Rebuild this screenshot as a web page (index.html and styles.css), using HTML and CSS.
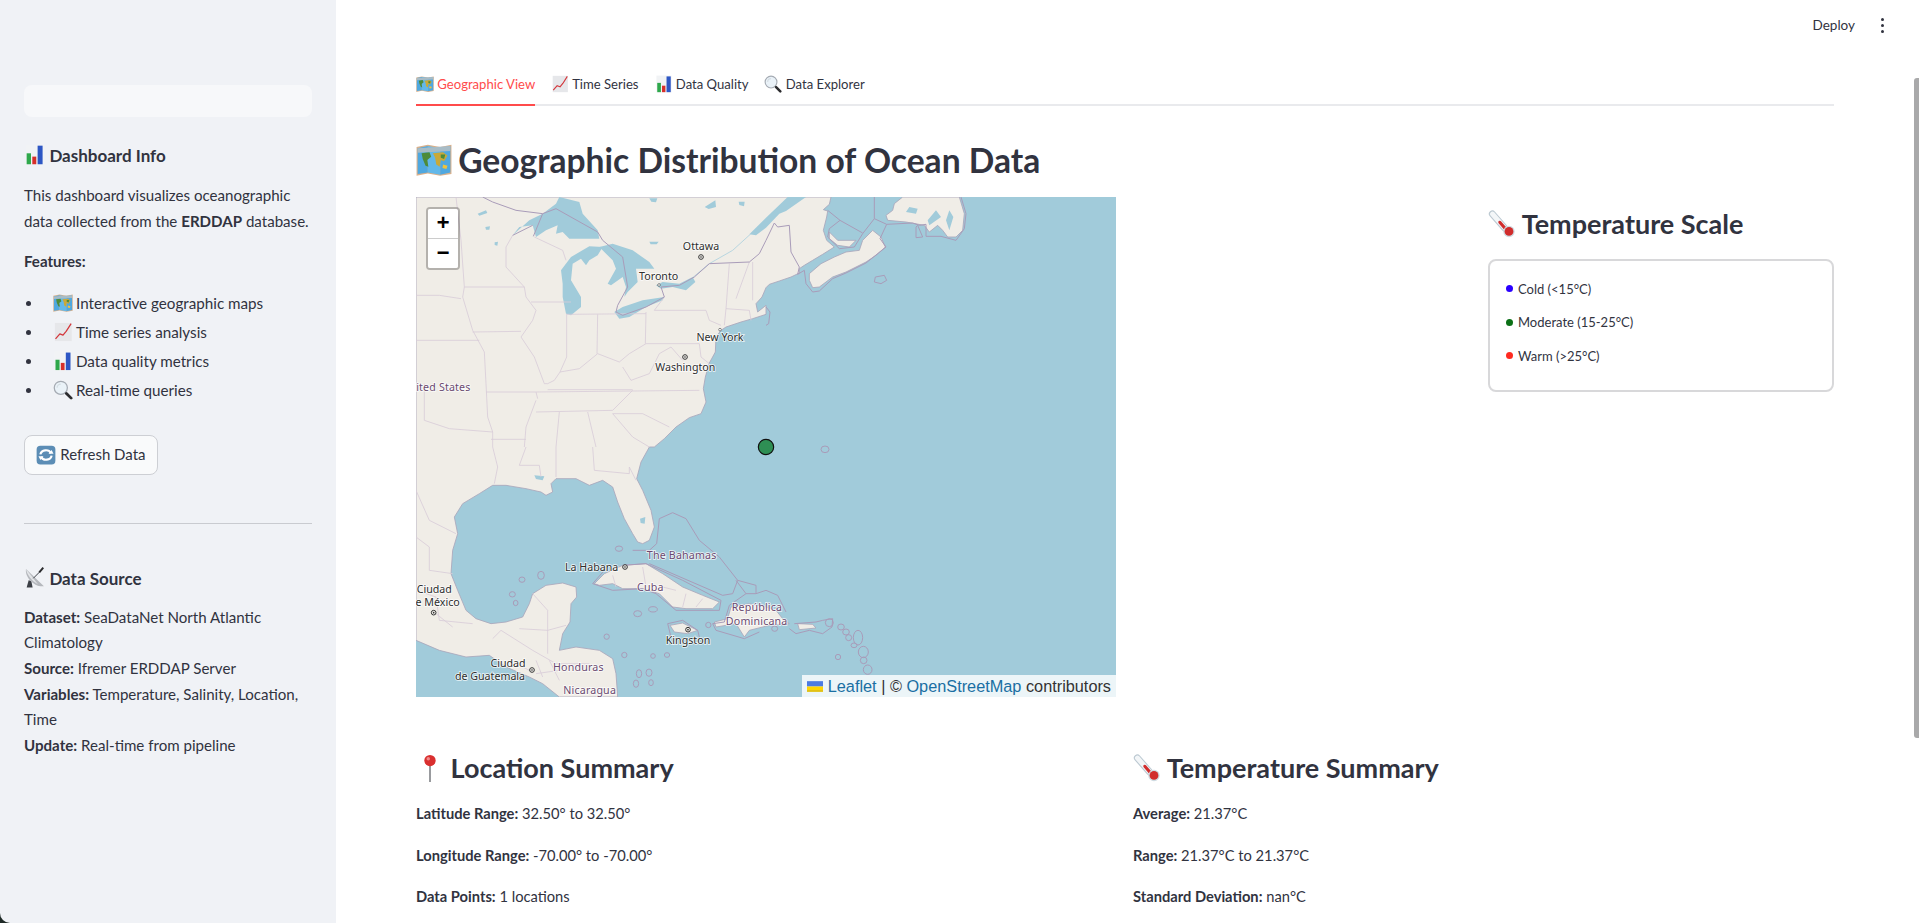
FILE: index.html
```html
<!DOCTYPE html>
<html lang="en">
<head>
    <meta charset="UTF-8">
    <title>Ocean Data Dashboard</title>
    <link rel="stylesheet" href="styles.css">
</head>
<body>
    <!-- emoji drawn once, used everywhere below -->
    <svg class="sprite" xmlns="http://www.w3.org/2000/svg">
        <symbol id="e-map" viewBox="0 0 64 64">
            <path fill="#d8b08c" d="M1 9 21 5 43 9 63 5V57L43 60 21 56 1 60Z"/>
            <path fill="#4fa8e0" d="M3 11 21 7V54L3 57Z"/>
            <path fill="#62b8ea" d="M21 7 43 11V58L21 54Z"/>
            <path fill="#4fa8e0" d="M43 11 61 7V54L43 58Z"/>
            <path fill="#a8bcc6" d="M3 11 61 7V16L3 19Z"/>
            <path fill="#4d8b3a" d="M10 20 24 18 27 26 20 32 22 44 17 42 12 30Z"/>
            <path fill="#c9a93a" d="M30 20 48 18 56 24 50 34 44 32 42 44 36 40 34 28Z"/>
            <path fill="#4d8b3a" d="M44 22 52 22 50 30 44 28Z"/>
            <path fill="#f0c23c" d="M48 40 56 42 54 48 47 46Z"/>
        </symbol>
        <symbol id="e-bars" viewBox="0 0 64 64">
            <rect x="5" y="2" width="54" height="60" fill="#f1f3f5"/>
            <rect x="8" y="28" width="13" height="33" fill="#2ea84b"/>
            <rect x="25" y="38" width="12" height="23" fill="#d62f2a"/>
            <rect x="41" y="5" width="15" height="56" fill="#2d56c4"/>
        </symbol>
        <symbol id="e-up" viewBox="0 0 64 64">
            <rect x="6" y="3" width="54" height="58" fill="#e6e7ea"/>
            <path fill="none" stroke="#d3363b" stroke-width="4" stroke-linejoin="round" d="M8 54 22 38 32 42 42 30 58 5"/>
        </symbol>
        <symbol id="e-glass" viewBox="0 0 64 64">
            <circle cx="25" cy="25" r="21" fill="#eaf2f8" stroke="#a5abb3" stroke-width="4"/>
            <path fill="none" stroke="#d5dde3" stroke-width="4" d="M13 25A12 12 0 0 1 25 13"/>
            <path stroke="#2b2b2e" stroke-width="9" stroke-linecap="round" d="M43 43 58 58"/>
        </symbol>
        <symbol id="e-refresh" viewBox="0 0 64 64">
            <rect x="2" y="2" width="60" height="60" rx="12" fill="#5c8db5"/>
            <path fill="none" stroke="#fff" stroke-width="7" d="M14 30A18 16 0 0 1 48 26"/>
            <path fill="#fff" d="M40 28 56 28 50 16Z"/>
            <path fill="none" stroke="#fff" stroke-width="7" d="M50 34A18 16 0 0 1 16 38"/>
            <path fill="#fff" d="M24 36 8 36 14 48Z"/>
        </symbol>
        <symbol id="e-dish" viewBox="0 0 64 64">
            <path fill="#3c4046" d="M14 40 8 62H26L22 42Z"/>
            <path fill="#b5b8bd" d="M6 6C2 30 30 62 60 58Z"/>
            <path fill="#e3e5e8" d="M6 6C8 20 22 42 42 52Z"/>
            <path stroke="#3c4046" stroke-width="3" d="M28 34 48 14"/>
            <path stroke="#2b2b2e" stroke-width="6" d="M46 16 58 2"/>
        </symbol>
        <symbol id="e-thermo" viewBox="0 0 64 64">
            <path stroke="#bcc9d2" stroke-width="16" stroke-linecap="round" d="M10 9 38 41"/>
            <path stroke="#f3f6f8" stroke-width="11" stroke-linecap="round" d="M10 9 38 41"/>
            <path stroke="#d12c2c" stroke-width="7" stroke-linecap="round" d="M27 28 46 50"/>
            <circle cx="48" cy="49" r="13" fill="#cfdbe2"/>
            <circle cx="48" cy="49" r="10" fill="#d12c2c"/>
        </symbol>
        <symbol id="e-pin" viewBox="0 0 64 64">
            <path stroke="#8b8d90" stroke-width="4" d="M32 26V64"/>
            <circle cx="32" cy="15" r="13" fill="#d92f2f"/>
            <circle cx="28" cy="11" r="4" fill="#f08a8a"/>
        </symbol>
    </svg>

    <aside class="sidebar">
        <div class="sidebar-box"></div>

        <h4 class="side-title"><svg class="emoji"><use href="#e-bars"/></svg> Dashboard Info</h4>
        <p class="side-text">This dashboard visualizes oceanographic data collected from the <b>ERDDAP</b> database.</p>
        <p class="side-text features"><b>Features:</b></p>
        <ul class="side-list">
            <li><svg class="emoji"><use href="#e-map"/></svg><span>Interactive geographic maps</span></li>
            <li><svg class="emoji"><use href="#e-up"/></svg><span>Time series analysis</span></li>
            <li><svg class="emoji"><use href="#e-bars"/></svg><span>Data quality metrics</span></li>
            <li><svg class="emoji"><use href="#e-glass"/></svg><span>Real-time queries</span></li>
        </ul>
        <button class="refresh-btn" type="button"><svg class="emoji"><use href="#e-refresh"/></svg> Refresh Data</button>

        <hr class="side-rule">

        <h4 class="side-title"><svg class="emoji"><use href="#e-dish"/></svg> Data Source</h4>
        <p class="side-text source">
            <b>Dataset:</b> SeaDataNet North Atlantic Climatology<br>
            <b>Source:</b> Ifremer ERDDAP Server<br>
            <b>Variables:</b> Temperature, Salinity, Location, Time<br>
            <b>Update:</b> Real-time from pipeline
        </p>
    </aside>

    <main class="main">
        <div class="toolbar">
            <span class="deploy">Deploy</span>
            <span class="kebab"><i></i><i></i><i></i></span>
        </div>

        <div class="content">
            <nav class="tabs">
                <a class="tab active"><svg class="emoji"><use href="#e-map"/></svg> Geographic View</a>
                <a class="tab"><svg class="emoji"><use href="#e-up"/></svg> Time Series</a>
                <a class="tab"><svg class="emoji"><use href="#e-bars"/></svg> Data Quality</a>
                <a class="tab"><svg class="emoji"><use href="#e-glass"/></svg> Data Explorer</a>
            </nav>

            <h2 class="page-title"><svg class="emoji"><use href="#e-map"/></svg> Geographic Distribution of Ocean Data</h2>

            <div class="map-row">
                <div class="map">
                    <svg class="map-art" viewBox="0 0 2100 1500" xmlns="http://www.w3.org/2000/svg">
                        <rect class="water" width="2100" height="1500"/>

                        <!-- mainland -->
                        <path class="land" d="M0 0 1245 0 1240 22 1222 38 1235 42 1232 60 1222 100 1232 130 1255 150 1220 172 1190 190 1165 205 1150 215 1150 228 1125 240 1090 252 1060 262 1050 272 1038 300 1020 320 1025 345 1050 325 1050 352 1010 365 975 375 930 390 915 400 900 420 898 465 880 498 868 540 862 575 870 615 855 650 820 662 780 690 745 725 715 750 700 750 675 795 662 845 680 880 705 940 715 990 700 1030 680 1040 665 1035 650 1010 625 965 605 915 590 870 560 850 520 865 480 845 420 845 405 860 410 885 390 895 375 885 330 875 270 865 230 865 190 890 140 920 115 960 125 1010 110 1060 105 1130 125 1180 150 1240 180 1265 225 1280 270 1275 320 1260 340 1220 350 1190 390 1165 440 1158 480 1170 482 1200 465 1220 462 1275 440 1310 430 1360 480 1350 550 1360 590 1385 600 1430 605 1500 430 1500 380 1460 340 1440 270 1410 220 1375 150 1380 70 1360 0 1330Z"/>
                        <!-- St Lawrence -->
                        <path class="lake" d="M1000 112 1050 62 1115 0 1170 0 1110 42 1090 50 1050 92 1020 115Z"/>
                        <path class="river" d="M830 242 880 200 950 160 1005 110"/>

                        <!-- islands -->
                        <path class="land" d="M1180 230 1215 200 1255 180 1290 165 1330 160 1340 130 1370 100 1395 120 1408 150 1380 175 1350 195 1290 225 1250 240 1210 270 1190 272 1180 250Z"/>
                        <path class="land" d="M1240 105 1265 130 1320 130 1300 150 1265 145 1240 125Z"/>
                        <path class="land" d="M1435 20 1460 0 1630 0 1645 50 1640 100 1620 120 1595 120 1580 100 1565 85 1540 105 1525 85 1470 75 1415 70 1410 55 1430 40Z"/>
                        <path class="land" d="M535 1160 565 1130 620 1105 690 1100 740 1130 800 1170 860 1195 910 1215 890 1235 810 1235 770 1230 730 1190 680 1175 620 1175 590 1160 550 1165Z"/>
                        <path class="land" d="M762 1285 800 1278 845 1300 815 1310 775 1305Z"/>
                        <path class="land" d="M895 1275 935 1265 945 1230 1000 1220 1050 1230 1080 1240 1100 1265 1120 1280 1060 1285 1000 1300 985 1320 960 1280 900 1290Z"/>
                        <path class="land" d="M1145 1280 1190 1282 1200 1293 1150 1298Z"/>

                        <!-- great lakes -->
                        <path class="lake" d="M290 115 340 70 380 50 420 20 430 0 490 15 500 50 545 100 550 125 490 125 460 125 440 105 420 110 425 85 390 100 360 120 350 85 310 90Z"/>
                        <path class="lake" d="M435 220 465 180 520 148 560 150 545 175 520 190 510 205 495 185 470 200 465 250 495 300 495 330 465 355 450 350 440 300 440 260Z"/>
                        <path class="lake" d="M550 150 590 140 650 160 700 195 715 215 660 215 665 255 635 285 625 300 630 270 620 240 585 265 575 260 600 215 590 190 565 165Z"/>
                        <path class="lake" d="M595 345 620 330 680 310 745 300 740 310 690 330 640 360 610 365Z"/>
                        <path class="lake" d="M720 265 740 255 790 260 830 240 838 255 810 280 770 270 735 275Z"/>
                        <path class="lake" d="M185 50 210 40 214 48 190 56Z M208 90 222 88 220 98 210 98Z M236 136 246 134 244 146 236 144Z M700 134 728 134 722 142 704 142Z M700 4 724 4 720 16 706 14Z M866 30 898 10 900 30 878 36Z M968 14 986 14 984 28 970 24Z M355 835 385 838 380 850 360 846Z M672 965 688 960 686 980 674 978Z"/>
                        <path class="lake" d="M1600 40 1612 60 1600 100 1590 70Z M1560 40 1575 60 1540 85 1535 70Z M1505 35 1480 30 1470 45 1500 50Z"/>

                        <!-- state and province lines -->
                        <g class="state">
                            <path d="M120 0 135 130 145 270 140 300 170 400 205 465 210 560 215 660 230 705 230 750"/>
                            <path d="M0 295 70 295 135 305M145 270 325 270 330 300 360 340 350 370 315 420 355 480 385 560 395 560"/>
                            <path d="M290 115 270 150 270 210 325 270M355 120 440 160 450 190"/>
                            <path d="M345 315 465 315M452 350 452 480 432 525 415 550 395 560"/>
                            <path d="M170 405 315 403M0 430 190 430M452 352 690 350M545 352 543 470M690 345 688 440"/>
                            <path d="M432 525 490 515 545 470 610 495 640 470 690 440"/>
                            <path d="M715 340 870 340 880 370 915 385M690 440 850 440 855 480 880 500"/>
                            <path d="M620 510 645 550 700 530 730 470 765 450 800 490"/>
                            <path d="M365 605 360 585 850 580M395 578 650 578M360 645 590 640 650 580"/>
                            <path d="M590 650 680 650 760 690M590 650 650 720 700 750"/>
                            <path d="M210 585 360 585M25 560 25 670 100 695 230 705M330 690 360 610M225 727 330 727"/>
                            <path d="M430 645 420 750M515 645 540 750M330 690 325 750"/>
                            <path d="M715 340 745 300M930 335 925 385M930 335 1000 340 1005 370M940 200 930 335M1000 195 960 305M1010 195 1010 310"/>
                            <path d="M230 750 245 810 235 860M330 750 310 805 370 805 375 840M420 750 420 840M530 750 535 820 640 830 640 810 660 850"/>
                            <path d="M0 880 40 970 120 1010M0 1020 40 1050 40 1120 110 1130M0 1180 60 1200 70 1270 170 1280M60 1250 110 1290"/>
                            <path d="M350 1190 395 1240 395 1320M310 1295 395 1300 450 1285M230 1325 255 1300 350 1360M395 1320 395 1370M350 1360 420 1400 520 1400"/>
                            <path d="M360 1390 380 1440M400 1390 430 1450M300 1400 340 1420M360 1430 430 1420"/>
                            <path d="M590 1135 600 1170M680 1110 690 1170M740 1170 780 1180M810 1190 800 1230M860 1205 840 1230"/>
                        </g>

                        <!-- borders at sea and between countries -->
                        <g class="border">
                            <path d="M200 0 230 15 300 40 380 50 420 35 545 105 560 130 620 180 635 270 605 325 600 345 620 355 690 330 745 300 735 270 790 265 835 240 880 200 1000 195 1030 170 1050 130 1075 78 1085 90 1120 85 1125 165 1150 210 1145 232"/>
                            <path d="M380 50 352 118M350 85 290 115"/>
                            <path d="M1145 232 1165 220 1170 260 1190 285 1210 282 1250 245 1290 228 1350 198 1410 150 1392 125 1412 82 1490 78 1510 85 1530 82 1530 118 1575 118 1620 130 1645 95 1650 50 1635 0"/>
                            <path d="M1375 0 1375 65 1412 82M1375 65 1340 110 1315 150 1270 155 1235 120 1240 95 1272 70M1272 70 1340 108M1235 40 1272 70"/>
                            <path d="M1505 85 1520 120 1500 122 1500 90Z"/>
                            <path d="M1378 240 1405 235 1412 250 1395 260 1375 255Z"/>
                            <path d="M1050 330 1062 345 1058 380 1050 385"/>
                            <path d="M730 965 770 947 810 965 850 1030 910 1080 965 1150 950 1190 920 1195 700 1100"/>
                            <path d="M730 965 722 1040 700 1060 650 1060"/>
                            <path d="M965 1150 1020 1165 1020 1190 990 1190 960 1150M1020 1190 1050 1180 1085 1195 1110 1245"/>
                            <path d="M620 1105 690 1100 800 1150 915 1210 910 1240 780 1240 720 1190 680 1175 590 1180 530 1160 565 1120"/>
                            <path d="M990 1190 940 1225 925 1275 890 1280 900 1300 985 1325 1030 1305"/>
                            <path d="M755 1280 800 1270 845 1300 850 1320M755 1280 765 1320"/>
                            <path d="M1135 1280 1200 1275 1220 1270 1250 1265 1248 1290 1220 1310 1180 1300 1140 1310 1120 1295"/>
                        </g>
                        <g class="isle">
                            <ellipse cx="609" cy="1055" rx="11" ry="8"/>
                            <ellipse cx="375" cy="1135" rx="10" ry="12"/>
                            <ellipse cx="318" cy="1148" rx="9" ry="8"/>
                            <ellipse cx="289" cy="1192" rx="9" ry="8"/>
                            <ellipse cx="299" cy="1218" rx="7" ry="8"/>
                            <ellipse cx="665" cy="1250" rx="12" ry="9"/>
                            <ellipse cx="711" cy="1237" rx="13" ry="8"/>
                            <ellipse cx="572" cy="1319" rx="8" ry="8"/>
                            <ellipse cx="625" cy="1374" rx="8" ry="8"/>
                            <ellipse cx="711" cy="1377" rx="7" ry="7"/>
                            <ellipse cx="753" cy="1374" rx="8" ry="7"/>
                            <ellipse cx="669" cy="1430" rx="8" ry="12"/>
                            <ellipse cx="699" cy="1427" rx="9" ry="11"/>
                            <ellipse cx="660" cy="1460" rx="8" ry="11"/>
                            <ellipse cx="705" cy="1457" rx="7" ry="9"/>
                            <ellipse cx="877" cy="1284" rx="8" ry="8"/>
                            <ellipse cx="1227" cy="757" rx="12" ry="10"/>
                            <ellipse cx="1240" cy="1277" rx="12" ry="12"/>
                            <ellipse cx="1266" cy="1380" rx="8" ry="8"/>
                            <ellipse cx="1275" cy="1290" rx="10" ry="9"/>
                            <ellipse cx="1290" cy="1305" rx="10" ry="9"/>
                            <ellipse cx="1298" cy="1322" rx="9" ry="9"/>
                            <ellipse cx="1326" cy="1322" rx="14" ry="22"/>
                            <ellipse cx="1314" cy="1345" rx="9" ry="7"/>
                            <ellipse cx="1342" cy="1365" rx="15" ry="17"/>
                            <ellipse cx="1343" cy="1390" rx="10" ry="10"/>
                            <ellipse cx="1355" cy="1418" rx="13" ry="14"/>
                            <ellipse cx="1076" cy="1295" rx="9" ry="8"/>
                        </g>

                        <!-- place labels -->
                        <g class="capital">
                            <circle cx="855" cy="180" r="7"/>
                            <circle cx="807" cy="480" r="7"/>
                            <circle cx="627" cy="1110" r="7"/>
                            <circle cx="53" cy="1247" r="7"/>
                            <circle cx="816" cy="1298" r="7"/>
                            <circle cx="348" cy="1419" r="7"/>
                        </g>
                        <g class="capital-dot">
                            <circle cx="855" cy="180" r="2.5"/>
                            <circle cx="807" cy="480" r="2.5"/>
                            <circle cx="627" cy="1110" r="2.5"/>
                            <circle cx="53" cy="1247" r="2.5"/>
                            <circle cx="816" cy="1298" r="2.5"/>
                            <circle cx="348" cy="1419" r="2.5"/>
                        </g>
                        <circle class="town" cx="729" cy="264" r="4"/>
                        <circle class="town" cx="912" cy="398" r="4"/>
                        <g class="label">
                            <text x="855" y="160">Ottawa</text>
                            <text x="728" y="250">Toronto</text>
                            <text x="912" y="433">New York</text>
                            <text x="808" y="522">Washington</text>
                            <text x="527" y="1122">La Habana</text>
                            <text x="55" y="1188">Ciudad</text>
                            <text x="55" y="1228">de México</text>
                            <text x="276" y="1410">Ciudad</text>
                            <text x="222" y="1450">de Guatemala</text>
                            <text x="816" y="1342">Kingston</text>
                        </g>
                        <g class="label country">
                            <text x="60" y="581">United States</text>
                            <text x="797" y="1085">The Bahamas</text>
                            <text x="703" y="1181">Cuba</text>
                            <text x="1023" y="1243">República</text>
                            <text x="1022" y="1283">Dominicana</text>
                            <text x="487" y="1422">Honduras</text>
                            <text x="521" y="1492">Nicaragua</text>
                        </g>

                        <circle class="marker" cx="1050" cy="750" r="23"/>
                    </svg>

                    <div class="zoom-control">
                        <a class="zoom-btn">+</a>
                        <a class="zoom-btn">−</a>
                    </div>
                    <div class="attribution">
                        <svg class="flag" viewBox="0 0 12 8"><rect width="12" height="4" fill="#4c7be1"/><rect y="4" width="12" height="2.7" fill="#ffd500"/><rect y="6.7" width="12" height="1.3" fill="#e0bc00"/></svg>
                        <a>Leaflet</a> <span class="sep">|</span> © <a>OpenStreetMap</a> contributors
                    </div>
                </div>

                <div class="scale">
                    <h3 class="section-title"><svg class="emoji"><use href="#e-thermo"/></svg> Temperature Scale</h3>
                    <div class="legend">
                        <div class="legend-row"><span class="dot cold"></span>Cold (&lt;15°C)</div>
                        <div class="legend-row"><span class="dot moderate"></span>Moderate (15-25°C)</div>
                        <div class="legend-row"><span class="dot warm"></span>Warm (&gt;25°C)</div>
                    </div>
                </div>
            </div>

            <div class="summary-row">
                <div>
                    <h3 class="section-title"><svg class="emoji"><use href="#e-pin"/></svg> Location Summary</h3>
                    <p class="stat"><b>Latitude Range:</b> 32.50° to 32.50°</p>
                    <p class="stat"><b>Longitude Range:</b> -70.00° to -70.00°</p>
                    <p class="stat"><b>Data Points:</b> 1 locations</p>
                </div>
                <div>
                    <h3 class="section-title"><svg class="emoji"><use href="#e-thermo"/></svg> Temperature Summary</h3>
                    <p class="stat"><b>Average:</b> 21.37°C</p>
                    <p class="stat"><b>Range:</b> 21.37°C to 21.37°C</p>
                    <p class="stat"><b>Standard Deviation:</b> nan°C</p>
                </div>
            </div>
        </div>

        <div class="scrollbar"></div>
    </main>
</body>
</html>
```

FILE: styles.css
```css
body {
    margin: 0;
    height: 923px;
    display: flex;
    overflow: hidden;
    background-color: #1f2a27;
    font-family: Lato, "Noto Sans", sans-serif;
    color: #31333f;
}

.sprite {
    display: none;
}

.emoji {
    width: 1.25em;
    height: 1.25em;
    vertical-align: -0.22em;
}

b {
    font-weight: 700;
}

/* sidebar */
.sidebar {
    width: 336px;
    flex-shrink: 0;
    box-sizing: border-box;
    padding: 85px 24px 0;
    background-color: #f0f2f6;
    border-bottom-left-radius: 10px;
}

.sidebar-box {
    height: 32px;
    background-color: #f7f8fa;
    border-radius: 8px;
}

.side-title {
    margin: 25px 0 0;
    font-size: 17px;
    line-height: 28px;
    font-weight: 700;
}

.side-text {
    margin: 13px 0 0;
    font-size: 15.1px;
    line-height: 25.6px;
}

.features {
    margin-top: 15px;
}

.side-list {
    margin: 14px 0 0;
    padding: 0;
    font-size: 15.2px;
    line-height: 29px;
    list-style: none;
}

.side-list li {
    display: flex;
    align-items: center;
}

.side-list li::before {
    content: "";
    width: 5px;
    height: 5px;
    margin: 0 22px 0 2px;
    border-radius: 50%;
    background-color: #31333f;
}

.side-list .emoji {
    width: 20px;
    height: 20px;
    margin-right: 3px;
}

.refresh-btn {
    display: block;
    margin-top: 30px;
    width: 134px;
    height: 40px;
    padding: 0;
    font-family: inherit;
    font-size: 15px;
    color: #31333f;
    background-color: #f9fafb;
    border: 1px solid #cdcfd4;
    border-radius: 8px;
}

.refresh-btn .emoji {
    width: 20px;
    height: 20px;
    vertical-align: -5px;
}

.side-rule {
    margin: 48px 0 0;
    border: none;
    border-top: 1px solid #c9cbd0;
}

.side-rule + .side-title {
    margin-top: 41px;
}

.source {
    margin-top: 12px;
}

/* main area */
.main {
    flex: 1;
    position: relative;
    overflow: hidden;
    background-color: #fff;
}

.toolbar {
    height: 60px;
    display: flex;
    justify-content: flex-end;
    align-items: center;
    gap: 26px;
    padding: 0 35px 10px 0;
    box-sizing: border-box;
    font-size: 13.5px;
}

.kebab {
    display: flex;
    flex-direction: column;
    gap: 3px;
}

.kebab i {
    width: 3px;
    height: 3px;
    border-radius: 50%;
    background-color: #31333f;
}

.content {
    padding: 0 85px 0 80px;
}

.tabs {
    display: flex;
    gap: 16px;
    height: 46px;
    box-sizing: border-box;
    border-bottom: 2px solid #e9eaed;
    font-size: 13.1px;
}

.tab {
    height: 46px;
    box-sizing: border-box;
    padding-top: 15px;
    white-space: nowrap;
}

.tab .emoji {
    width: 18px;
    height: 18px;
    vertical-align: -4px;
}

.tab.active {
    color: #ff4b4b;
    border-bottom: 2px solid #ff4b4b;
}

.page-title {
    margin: 29px 0 0;
    height: 62px;
    font-size: 33.6px;
    line-height: 50px;
    font-weight: 700;
    white-space: nowrap;
}

.page-title .emoji {
    width: 36px;
    height: 36px;
    margin-right: -2px;
    vertical-align: -5px;
}

.map-row {
    display: grid;
    grid-template-columns: 700px 346px;
    justify-content: space-between;
}

.map {
    position: relative;
    width: 700px;
    height: 500px;
    overflow: hidden;
}

.map-art {
    display: block;
    width: 700px;
    height: 500px;
}

.water {
    fill: #a1cbda;
}

.land {
    fill: #f0ede7;
    stroke: #a9a6bb;
    stroke-width: 2.5;
    stroke-linejoin: round;
}

.lake {
    fill: #a1cbda;
}

.river {
    fill: none;
    stroke: #b8d6e0;
    stroke-width: 3;
}

.state path {
    fill: none;
    stroke: #d9cdd9;
    stroke-width: 2.5;
}

.border path {
    fill: none;
    stroke: #a99cb9;
    stroke-width: 3;
    stroke-linejoin: round;
}

.isle ellipse {
    fill: none;
    stroke: #a99cb9;
    stroke-width: 3;
}

.capital circle {
    fill: #f4f2ee;
    stroke: #333;
    stroke-width: 3;
}

.capital-dot circle {
    fill: #333;
}

.town {
    fill: #fff;
    stroke: #555;
    stroke-width: 2;
}

.label text {
    font-family: "Noto Sans", sans-serif;
    font-size: 32px;
    text-anchor: middle;
    fill: #2e2e2e;
    stroke: #fff;
    stroke-opacity: 0.8;
    stroke-width: 5px;
    paint-order: stroke;
}

.label.country text {
    fill: #6a4a70;
    letter-spacing: 0.5px;
}

.marker {
    fill: #2e8f54;
    stroke: #101010;
    stroke-width: 3.5;
}

.zoom-control {
    position: absolute;
    left: 10px;
    top: 10px;
    border: 2px solid rgba(0, 0, 0, 0.25);
    border-radius: 4px;
    background-clip: padding-box;
}

.zoom-btn {
    display: block;
    box-sizing: border-box;
    width: 30px;
    height: 30px;
    line-height: 32px;
    text-align: center;
    font-family: "Liberation Mono", monospace;
    font-size: 22px;
    font-weight: 700;
    color: #000;
    background-color: #fff;
}

.zoom-btn:first-child {
    border-bottom: 1px solid #ccc;
    border-radius: 2px 2px 0 0;
}

.zoom-btn:last-child {
    height: 29px;
    border-radius: 0 0 2px 2px;
}

.attribution {
    position: absolute;
    right: 0;
    bottom: 0;
    height: 22px;
    padding: 0 5px;
    font-family: "Liberation Sans", sans-serif;
    font-size: 16.3px;
    line-height: 22px;
    color: #333;
    white-space: nowrap;
    background-color: rgba(255, 255, 255, 0.8);
}

.attribution a {
    color: #1a6fa3;
}

.flag {
    width: 16px;
    height: 11px;
}

.scale {
    padding-top: 9px;
}

.section-title {
    margin: 0;
    font-size: 27px;
    line-height: 36px;
    font-weight: 700;
    white-space: nowrap;
}

.section-title .emoji {
    width: 28px;
    height: 28px;
    vertical-align: -4px;
}

.legend {
    box-sizing: border-box;
    height: 133px;
    margin-top: 17px;
    padding: 11px 0 0 16px;
    border: 2px solid #d8d8da;
    border-radius: 8px;
    font-size: 13px;
}

.legend-row {
    display: flex;
    align-items: center;
    height: 33.5px;
}

.dot {
    width: 7px;
    height: 7px;
    margin-right: 5px;
    border-radius: 50%;
}

.dot.cold {
    background-color: #2a00ff;
}

.dot.moderate {
    background-color: #0b7016;
}

.dot.warm {
    background-color: #ff2a20;
}

.summary-row {
    display: grid;
    grid-template-columns: 701px 701px;
    gap: 16px;
    margin-top: 53px;
}

.stat {
    margin: 0;
    font-size: 14.7px;
    line-height: 41.5px;
}

.section-title + .stat {
    margin-top: 7px;
}

.scrollbar {
    position: absolute;
    top: 78px;
    right: 0;
    width: 5px;
    height: 660px;
    background-color: #a9a9aa;
    border-radius: 3px 0 0 3px;
}
```
